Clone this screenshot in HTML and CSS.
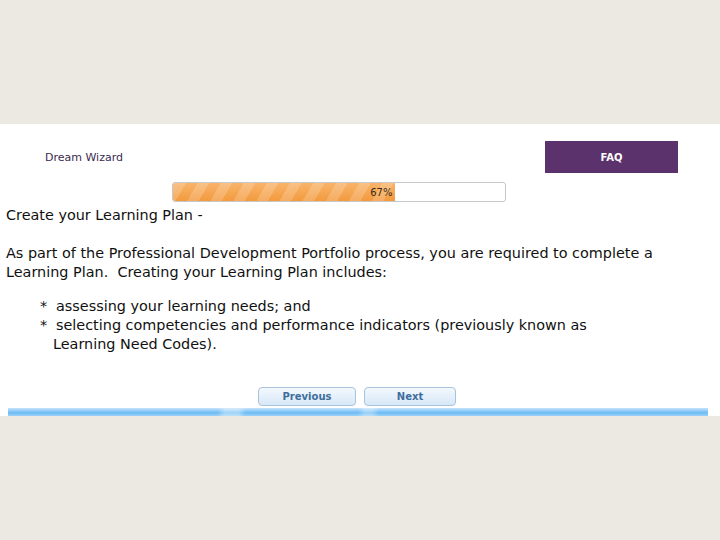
FILE: index.html
```html
<!DOCTYPE html>
<html>
<head>
<meta charset="utf-8">
<link rel="stylesheet" href="styles.css">
</head>
<body>
<div class="top-space"></div>
<div class="panel">
  <div class="header">
    <div class="brand">Dream Wizard</div>
    <div class="faq">FAQ</div>
  </div>
  <div class="progress-row">
    <div class="progress">
      <div class="fill" style="width:67%"><span>67%</span></div>
    </div>
  </div>
  <div class="content">
    <p class="title">Create your Learning Plan -</p>
    <p class="para">As part of the Professional Development Portfolio process, you are required to complete a Learning Plan.&nbsp; Creating your Learning Plan includes:</p>
    <ul class="list">
      <li><span class="star">*</span><span>assessing your learning needs; and</span></li>
      <li><span class="star">*</span><span>selecting competencies and performance indicators (previously known as<br><span class="cont">Learning Need Codes).</span></span></li>
    </ul>
  </div>
  <div class="nav">
    <div class="btn">Previous</div>
    <div class="btn">Next</div>
  </div>
  <div class="bluebar"></div>
</div>
</body>
</html>
```

FILE: styles.css
```css
html, body {
  margin: 0;
  padding: 0;
  background: #ebe9e1;
  width: 720px;
  height: 540px;
  overflow: hidden;
  font-family: "DejaVu Sans", Verdana, sans-serif;
}
.top-space {
  height: 124px;
}
.panel {
  background: #ffffff;
  height: 292px;
  display: flex;
  flex-direction: column;
}
.header {
  display: flex;
  align-items: center;
  justify-content: space-between;
  padding: 17px 42px 0 45px;
  height: 32px;
}
.brand {
  font-size: 11px;
  color: #3b2b4f;
  margin-top: 1px;
}
.faq {
  width: 133px;
  height: 32px;
  background: #5b326b;
  color: #ffffff;
  font-size: 10px;
  font-weight: bold;
  display: flex;
  align-items: center;
  justify-content: center;
}
.progress-row {
  padding: 9px 0 0 172px;
}
.progress {
  width: 332px;
  height: 18px;
  border: 1px solid #c8c8c8;
  border-radius: 3px;
  background: #ffffff;
  overflow: hidden;
}
.fill {
  height: 100%;
  background:
    repeating-linear-gradient(-60deg, rgba(255,255,255,0.0) 0 10px, rgba(255,255,255,0.18) 10px 20px),
    linear-gradient(#f8b46a, #f39a3e);
  display: flex;
  align-items: center;
  justify-content: flex-end;
}
.fill span {
  font-size: 10px;
  color: #3a2a1a;
  padding-right: 3px;
}
.content {
  padding: 4px 0 0 6px;
  font-size: 14.4px;
  line-height: 19px;
  color: #111111;
}
.content p {
  margin: 0;
}
.title {
  margin-bottom: 19px !important;
}
.para {
  max-width: 662px;
}
.list {
  list-style: none;
  margin: 15px 0 0 0;
  padding: 0 0 0 34px;
}
.list li {
  display: flex;
}
.star {
  width: 16px;
  flex: none;
}
.cont {
  margin-left: -3px;
}
.nav {
  display: flex;
  gap: 8px;
  padding: 33px 0 0 258px;
}
.btn {
  width: 96px;
  height: 17px;
  border: 1px solid #a9c3dc;
  border-radius: 4px;
  background: linear-gradient(#f3f8fd, #d7e8f8);
  color: #3f6d9b;
  font-size: 10px;
  font-weight: bold;
  display: flex;
  align-items: center;
  justify-content: center;
}
.btn + .btn {
  width: 90px;
}
.bluebar {
  margin: 2px 12px 0 8px;
  height: 8px;
  background:
    linear-gradient(100deg, transparent 0 30%, rgba(255,255,255,0.35) 31% 33%, transparent 34% 50%, rgba(255,255,255,0.3) 51% 52%, transparent 53%),
    linear-gradient(#c6e3fb, #6bbcf4 60%, #9fd2f8);
}
```
